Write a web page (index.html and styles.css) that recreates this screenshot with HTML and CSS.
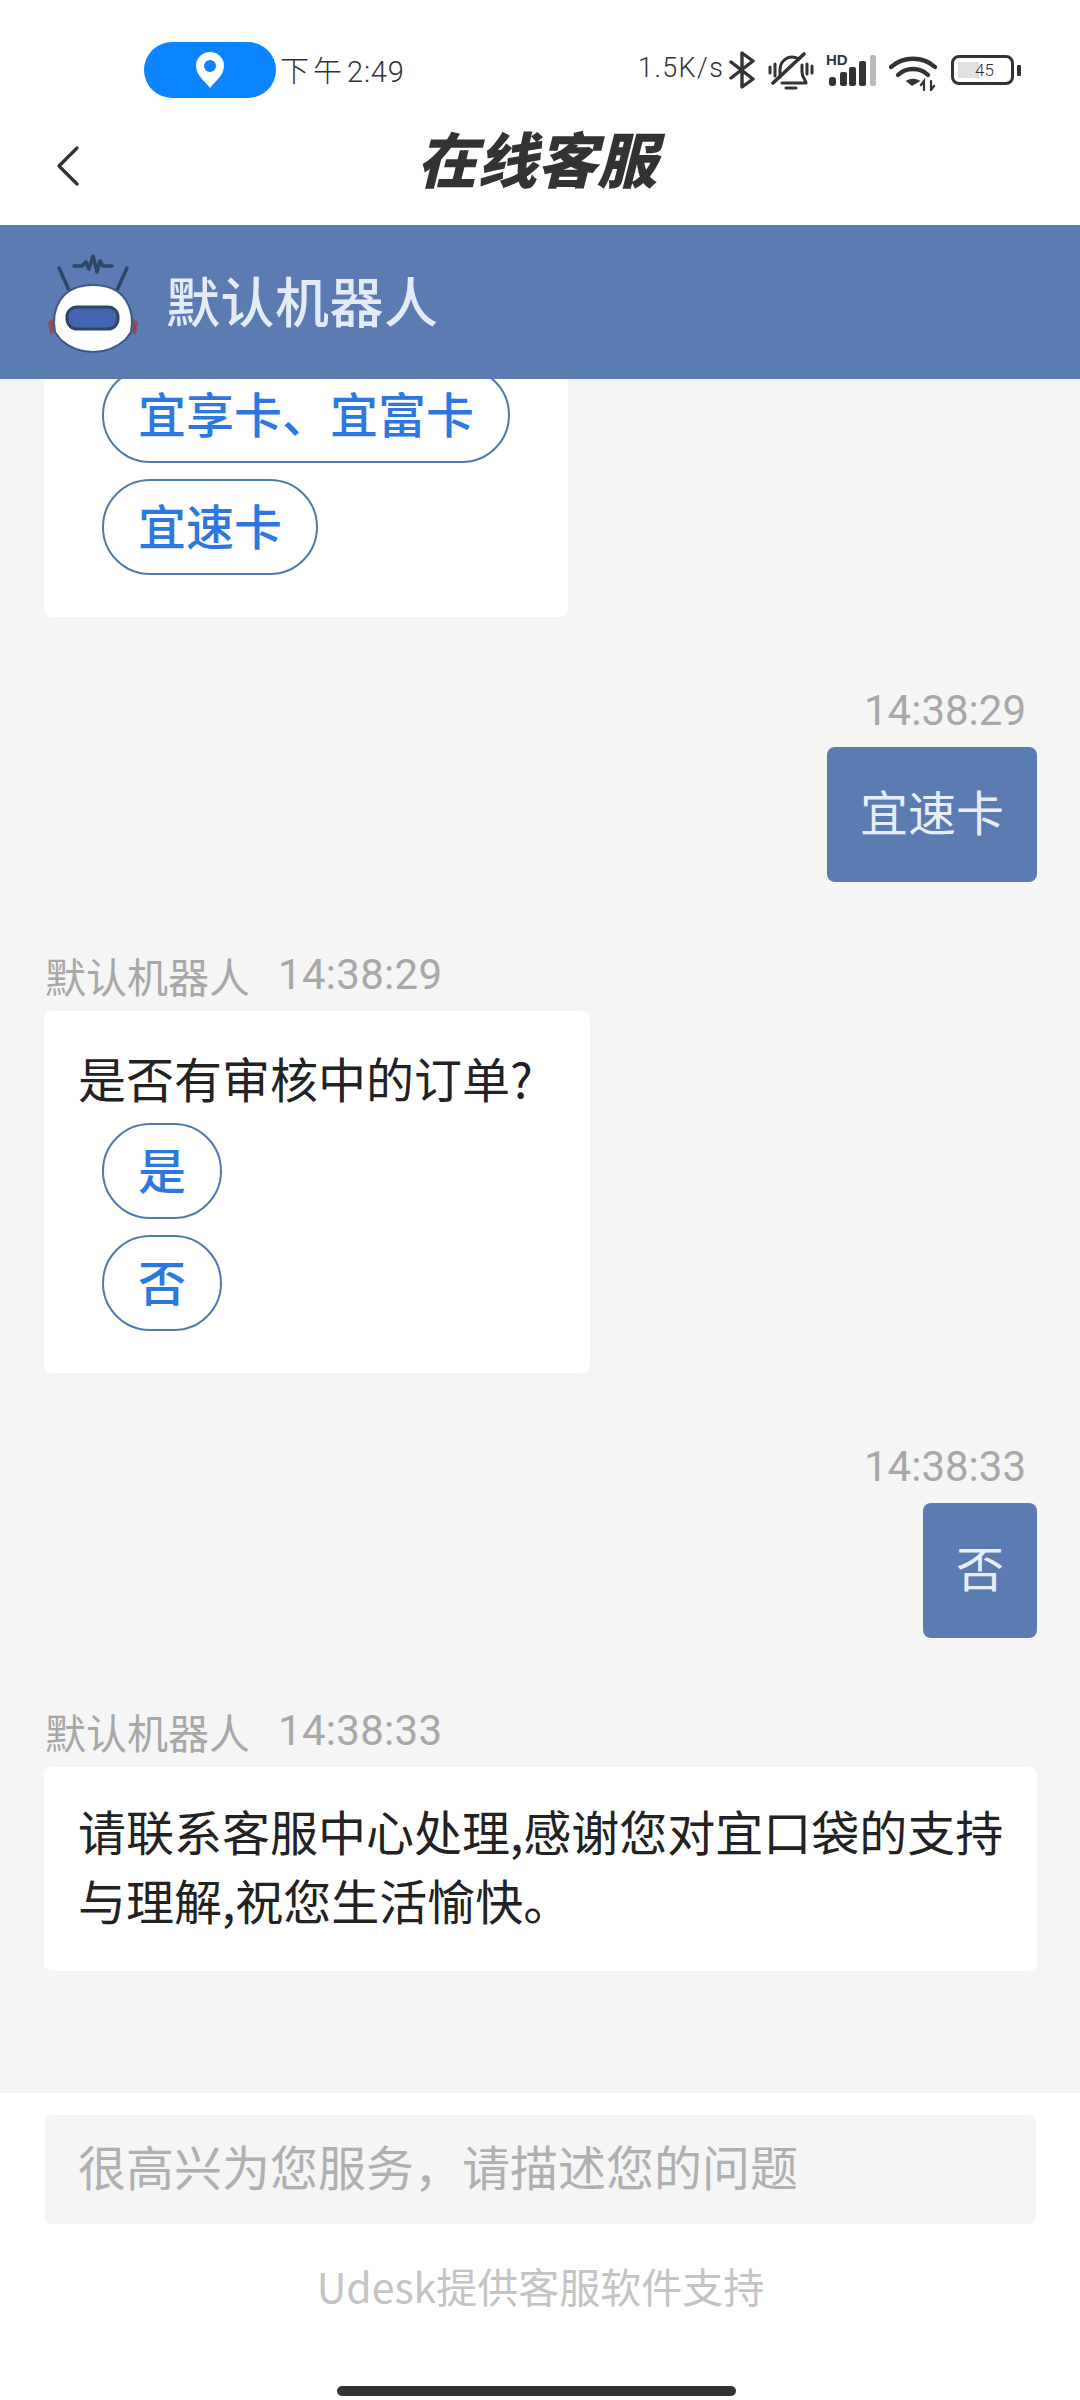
FILE: index.html
```html
<!DOCTYPE html>
<html lang="zh-CN">
<head>
<meta charset="utf-8">
<title>在线客服</title>
<link rel="stylesheet" href="styles.css">
</head>
<body>
<div class="page">
  <div class="status">
    <div class="pill">
      <svg width="30" height="38" viewBox="0 0 30 38"><path d="M15 37 C11 31 1 25 1 15 A14 14 0 0 1 29 15 C29 25 19 31 15 37Z" fill="#fff"/><circle cx="15" cy="15" r="6" fill="#0a84ff"/></svg>
    </div>
    <span class="clock"><span class="clock-cjk">下午</span>2:49</span>
    <span class="speed">1.5K/s</span>
    <svg class="ic-bt" width="26" height="38" viewBox="0 0 26 38"><path d="M2 11 L24 28 L13 36 V2 L24 10 L2 27" fill="none" stroke="#333" stroke-width="3.4" stroke-linejoin="round" stroke-linecap="round"/></svg>
    <svg class="ic-bell" width="46" height="38" viewBox="0 0 46 38" fill="none" stroke="#333" stroke-width="3" stroke-linecap="round" stroke-linejoin="round"><path d="M5 31 L36 2" stroke-width="3.6"/><path d="M12 25 V18 C12 10 18 5 24 5 C27 5 29 6 31 7"/><path d="M34 13 V20 C34 26 38 28 38 31 H14"/><path d="M18 36 H28"/><path d="M2 15 V21 M7 12 V24 M39 12 V22 M44 14 V21"/></svg>
    <div class="ic-signal">
      <span class="hd">HD</span>
      <svg width="50" height="34" viewBox="0 0 50 34"><rect x="3" y="23" width="7" height="9" rx="3" fill="#333"/><rect x="14" y="18" width="7" height="14" rx="2" fill="#333"/><rect x="23" y="13" width="7" height="19" rx="2" fill="#333"/><rect x="33" y="7" width="7" height="25" rx="2" fill="#333"/><rect x="44" y="1" width="6" height="31" rx="2" fill="#bbb"/></svg>
    </div>
    <svg class="ic-wifi" width="48" height="36" viewBox="0 0 48 36" fill="none" stroke="#333" stroke-width="4.4" stroke-linecap="round"><path d="M2 12 C14 1 34 1 46 12"/><path d="M9 20 C17 12 31 12 39 20"/><path d="M23 30 L18 26 C21 24 27 24 30 26Z" fill="#333" stroke-width="1.5"/><path d="M35 35 V26 L32 30 M42 26 V35 L45 31" stroke-width="2.2"/></svg>
    <div class="battery">
      <div class="cell"><span class="level"></span><span class="pct">45</span></div>
      <span class="nub"></span>
    </div>
  </div>

  <div class="nav">
    <svg class="back" width="24" height="40" viewBox="0 0 24 40"><path d="M21 2 L3 20 L21 38" fill="none" stroke="#333" stroke-width="3.2" stroke-linecap="round" stroke-linejoin="round"/></svg>
    <h1 class="title">在线客服</h1>
  </div>

  <div class="agent">
    <svg class="avatar" width="100" height="102" viewBox="0 0 100 102">
      <path d="M13 16 L23 38 M81 16 L71 38" stroke="#2f4666" stroke-width="3.4" stroke-linecap="round"/>
      <path d="M28 14 H36 L40 10 L43 17 L47 4 L51 20 L54 9 L57 14 H66" fill="none" stroke="#2f4666" stroke-width="3.6" stroke-linecap="round" stroke-linejoin="round"/>
      <path d="M2 70 L8 66 V80 L4 83Z M92 70 L86 66 V80 L90 83Z" fill="#8a4f5c"/>
      <path d="M15 88 L9 80 C5 58 14 33 47 33 C80 33 89 58 85 80 L79 88 C70 96 60 100 47 100 C34 100 24 96 15 88Z" fill="#fff" stroke="#3c5a88" stroke-width="2"/>
      <rect x="21" y="55" width="51" height="22" rx="10" fill="#4466b0" stroke="#2f4666" stroke-width="3"/>
    </svg>
    <span class="agent-name">默认机器人</span>
  </div>

  <div class="messages">
    <div class="card card-opts card-first">
      <div class="opts">
        <span class="opt">宜享卡、宜富卡</span>
        <span class="opt">宜速卡</span>
      </div>
    </div>

    <div class="mine">
      <span class="stamp">14:38:29</span>
      <div class="bubble">宜速卡</div>
    </div>

    <div class="theirs">
      <div class="meta"><span>默认机器人</span><span>14:38:29</span></div>
      <div class="card card-question">
        <p class="line">是否有审核中的订单?</p>
        <div class="opts opts-indent">
          <span class="opt">是</span>
          <span class="opt">否</span>
        </div>
      </div>
    </div>

    <div class="mine">
      <span class="stamp">14:38:33</span>
      <div class="bubble">否</div>
    </div>

    <div class="theirs">
      <div class="meta"><span>默认机器人</span><span>14:38:33</span></div>
      <div class="card card-wide">
        <p class="line">请联系客服中心处理,感谢您对宜口袋的支持<br>与理解,祝您生活愉快。</p>
      </div>
    </div>
  </div>

  <div class="composer">
    <div class="input">很高兴为您服务，请描述您的问题</div>
    <div class="credit">Udesk提供客服软件支持</div>
    <div class="home"></div>
  </div>
</div>
</body>
</html>
```

FILE: styles.css
```css
* { box-sizing: border-box; }
html, body { margin: 0; padding: 0; }
body { font-family: "Noto Sans CJK SC", "Noto Sans", sans-serif; background: #fff; }
.page { width: 1080px; height: 2400px; display: flex; flex-direction: column; overflow: hidden; background: #f5f5f6; }

.status { height: 120px; flex: none; background: #fff; display: flex; align-items: flex-start; padding: 42px 0 0 144px; color: #333; }
.pill { width: 132px; height: 56px; border-radius: 28px; background: #0a84ff; display: flex; align-items: center; justify-content: center; }
.clock { margin: 7px 0 0 4px; width: 124px; font: 300 29px/40px "Roboto", sans-serif; white-space: nowrap; letter-spacing: .8px; }
.clock-cjk { font-family: "Noto Sans CJK SC", sans-serif; font-weight: 300; font-size: 29px; letter-spacing: 4px; margin-right: 1px; }
.speed { margin: 8px 0 0 234px; width: 85px; font-size: 27px; line-height: 36px; font-weight: 300; font-family: "Roboto", sans-serif; letter-spacing: 1.4px; }
.ic-bt { margin: 9px 0 0 6px; flex: none; }
.ic-bell { margin: 10px 0 0 13px; flex: none; }
.ic-signal { margin: 12px 0 0 12px; width: 52px; height: 34px; position: relative; flex: none; }
.ic-signal svg { display: block; }
.hd { position: absolute; left: 0; top: -2px; font: bold 15px/15px "Liberation Sans", sans-serif; color: #333; }
.ic-wifi { margin: 13px 0 0 11px; flex: none; }
.battery { margin: 13px 0 0 14px; display: flex; align-items: center; flex: none; }
.cell { width: 63px; height: 30px; border: 3px solid #333; border-radius: 8px; position: relative; display: flex; align-items: center; justify-content: center; padding-left: 4px; }
.level { position: absolute; left: 4px; top: 4px; bottom: 4px; width: 21px; background: #e0e0e0; }
.pct { position: relative; font: 300 17px/20px "Roboto", sans-serif; color: #333; }
.nub { width: 4px; height: 11px; background: #333; margin-left: 3px; border-radius: 1px; }

.nav { height: 105px; flex: none; background: #fff; position: relative; display: flex; align-items: center; justify-content: center; }
.back { position: absolute; left: 56px; top: 26px; }
.title { margin: 0 6px 32px 0; font-size: 60px; line-height: 70px; font-weight: 900; font-style: italic; color: #333; letter-spacing: 0; }

.agent { height: 154px; flex: none; background: #5b7bb3; display: flex; align-items: center; padding-left: 46px; position: relative; z-index: 1; }
.avatar { flex: none; margin-top: 2px; }
.agent-name { margin-left: 20px; font-size: 54px; font-weight: 500; line-height: 70px; letter-spacing: .5px; color: #e3ebf7; margin-top: -5px; }

.messages { flex: 1; min-height: 0; display: flex; flex-direction: column; padding: 0 43px 0 44px; overflow: hidden; }
.card { background: #fff; border-radius: 8px; align-self: flex-start; }
.card-first { margin-top: -12px; width: 524px; padding: 0 58px 42px; }
.card-question { width: 546px; padding: 32px 34px 42px; }
.card-wide { width: 993px; padding: 29px 34px 37px; }
.opts { display: flex; flex-direction: column; align-items: flex-start; gap: 16px; }
.opts-indent { margin: 11px 0 0 24px; }
.opt { height: 96px; padding: 0 34px; border: 2px solid #4f79ad; border-radius: 48px; font-size: 48px; font-weight: 500; line-height: 86px; color: #2d78e0; white-space: nowrap; }
.line { margin: 0; font-size: 48px; line-height: 69px; color: #222; white-space: nowrap; }

.mine { margin-top: 68px; display: flex; flex-direction: column; align-items: flex-end; }
.stamp { height: 50px; margin: 1px 11px 11px 0; font: 42px/50px "Roboto", sans-serif; color: #a8a8a8; }
.bubble { height: 135px; padding: 0 33px; background: #5b7bb3; border-radius: 8px; color: #e8eef8; font-size: 48px; line-height: 127px; }

.theirs { margin-top: 68px; display: flex; flex-direction: column; }
.meta { height: 50px; margin: 0 0 11px 1px; display: flex; gap: 28px; font-size: 41px; line-height: 50px; color: #a8a8a8; }
.meta span:last-child { font-family: "Roboto", sans-serif; font-size: 42px; letter-spacing: .3px; }

.composer { height: 307px; flex: none; background: #fff; padding: 22px 44px 0 45px; display: flex; flex-direction: column; }
.input { height: 109px; background: #f5f5f6; border-radius: 6px; padding-left: 33px; font-size: 48px; line-height: 100px; color: #b0b0b0; white-space: nowrap; }
.credit { margin-top: 34px; text-align: center; font-size: 41px; line-height: 54px; color: #c4c4c4; }
.home { width: 399px; height: 10px; margin: 74px 0 0 292px; background: #333; border-radius: 5px; flex: none; }
```
